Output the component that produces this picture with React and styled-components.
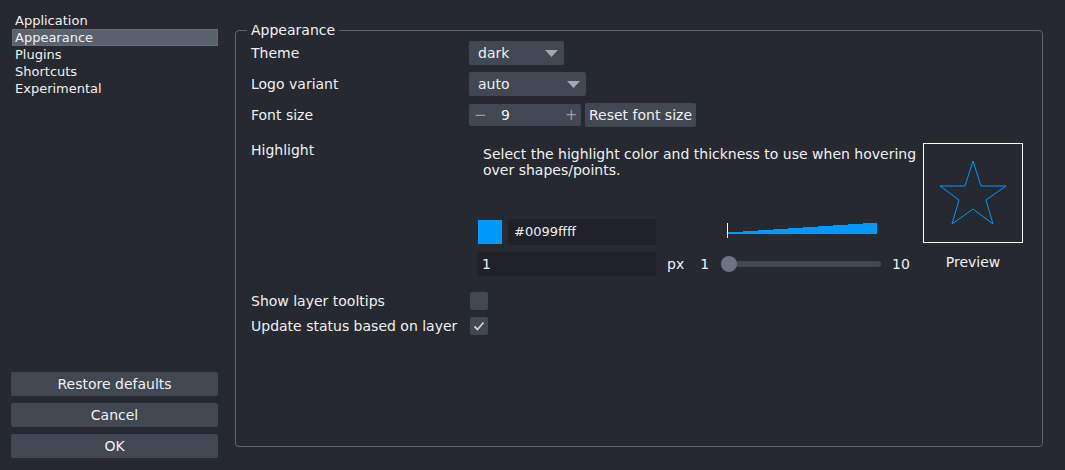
import styled, { createGlobalStyle } from "styled-components";

const GlobalStyle = createGlobalStyle`
  html, body {
    margin: 0;
    height: 100%;
    background: #262930;
    overflow: hidden;
  }
  body {
    font-family: "DejaVu Sans", "Liberation Sans", sans-serif;
    font-size: 14px;
    color: #f0f1f2;
  }
`;

const Dialog = styled.div`
  display: flex;
  width: 1065px;
  height: 470px;
  box-sizing: border-box;
`;

const Sidebar = styled.div`
  width: 207px;
  padding: 12px 0 12px 11px;
  display: flex;
  flex-direction: column;
`;

const NavList = styled.div`
  display: flex;
  flex-direction: column;
  margin-left: 1px;
  width: 206px;
  font-size: 13px;
`;

const NavItem = styled.div`
  height: 17px;
  line-height: 17px;
  padding-left: 3px;
  box-sizing: border-box;
  background: ${(p) => (p.$active ? "#5a626c" : "transparent")};
  outline: ${(p) => (p.$active ? "1px solid #646c76" : "none")};
  outline-offset: -1px;
`;

const ButtonStack = styled.div`
  margin-top: auto;
  display: flex;
  flex-direction: column;
  gap: 7px;
`;

const Button = styled.div`
  height: ${(p) => p.$h || 24}px;
  line-height: ${(p) => p.$h || 24}px;
  background: #414851;
  border-radius: 2px;
  text-align: center;
  padding: 0 ${(p) => (p.$pad ? 4 : 0)}px;
  white-space: nowrap;
`;

const Main = styled.div`
  flex: 1;
  margin: 30px 22px 23px 17px;
  display: flex;
`;

const GroupBox = styled.div`
  position: relative;
  flex: 1;
  border: 1px solid #5f6670;
  border-radius: 4px;
  padding: 10px 15px;
`;

const Legend = styled.div`
  position: absolute;
  top: -9px;
  left: 11px;
  padding: 0 4px;
  line-height: 17px;
  background: #262930;
`;

const Form = styled.div`
  display: grid;
  grid-template-columns: 218px auto;
  row-gap: 7px;
  align-items: center;
  justify-items: start;
`;

const Label = styled.div`
  line-height: 17px;
  align-self: ${(p) => (p.$top ? "start" : "center")};
  margin-top: ${(p) => (p.$top ? 8 : 0)}px;
`;

const Combo = styled.div`
  width: ${(p) => p.$w}px;
  height: 24px;
  box-sizing: border-box;
  background: #414851;
  border-radius: 2px;
  padding: 0 6px 0 9px;
  display: flex;
  align-items: center;
  justify-content: space-between;
`;

const Inline = styled.div`
  display: flex;
  align-items: center;
  gap: 4px;
`;

const SpinBox = styled.div`
  width: 112px;
  height: 22px;
  background: #414851;
  border-radius: 2px;
  display: flex;
  align-items: center;
  padding: 0 5px;
  box-sizing: border-box;
`;

const SpinSign = styled.span`
  color: #9a9fa6;
  font-size: 15px;
  width: 11px;
  text-align: center;
`;

const SpinValue = styled.span`
  margin-left: 16px;
  flex: 1;
`;

const Highlight = styled.div`
  height: 151px;
  display: flex;
  padding-left: 8px;
`;

const HighlightLeft = styled.div`
  width: 438px;
  display: flex;
  flex-direction: column;
`;

const Description = styled.div`
  margin-top: 12px;
  padding-left: 6px;
  line-height: 16px;
  height: 32px;
  width: 440px;
`;

const ColorRow = styled.div`
  margin-top: 41px;
  height: 26px;
  display: flex;
  align-items: center;
`;

const Swatch = styled.div`
  width: 24px;
  height: 24px;
  margin-left: 1px;
  margin-right: 6px;
  background: #0099ff;
`;

const TextInput = styled.div`
  width: ${(p) => p.$w}px;
  height: ${(p) => p.$h}px;
  line-height: ${(p) => p.$h}px;
  font-size: ${(p) => p.$fs}px;
  background: #1f2126;
  border-radius: 2px;
  padding-left: ${(p) => p.$pl}px;
  box-sizing: border-box;
`;

const WidthPreview = styled.svg`
  align-self: flex-start;
  margin-top: 3px;
  margin-left: 71px;
`;

const PxRow = styled.div`
  margin-top: 7px;
  height: 24px;
  display: flex;
  align-items: center;
`;

const PxText = styled.span`
  margin-left: ${(p) => p.$ml}px;
  line-height: 17px;
`;

const Slider = styled.div`
  position: relative;
  margin-left: ${(p) => p.$ml}px;
  width: 160px;
  height: 6px;
  background: #414851;
  border-radius: 3px;
`;

const Handle = styled.div`
  position: absolute;
  left: 0;
  top: -5px;
  width: 16px;
  height: 16px;
  border-radius: 50%;
  background: #6c7480;
`;

const HighlightRight = styled.div`
  width: 100px;
  margin-left: 8px;
  display: flex;
  flex-direction: column;
  align-items: center;
  padding-top: 9px;
`;

const PreviewBox = styled.div`
  width: 100px;
  height: 100px;
  box-sizing: border-box;
  border: 1px solid #ffffff;
  display: flex;
`;

const PreviewLabel = styled.div`
  margin-top: 11px;
  line-height: 17px;
`;

const CheckBox = styled.div`
  width: 18px;
  height: 18px;
  margin-left: 1px;
  background: #414851;
  border-radius: 2px;
  display: flex;
  align-items: center;
  justify-content: center;
`;

function Arrow() {
  return (
    <svg width="13" height="7" viewBox="0 0 13 7">
      <polygon points="0,0 13,0 6.5,7" fill="#a4a9b0" />
    </svg>
  );
}

function Star() {
  return (
    <svg width="98" height="98" viewBox="1 1 98 98">
      <polygon
        points="50,18 58,43 83,43 63,57 70,81 50,66 29,81 36,57 17,43 42,43"
        fill="none"
        stroke="#0099ff"
        strokeWidth="1"
      />
    </svg>
  );
}

const navItems = ["Application", "Appearance", "Plugins", "Shortcuts", "Experimental"];

export default function App() {
  const steps = Array.from({ length: 10 }, (_, i) => i);

  return (
    <>
      <GlobalStyle />
      <Dialog>
        <Sidebar>
          <NavList>
            {navItems.map((item) => (
              <NavItem key={item} $active={item === "Appearance"}>
                {item}
              </NavItem>
            ))}
          </NavList>
          <ButtonStack>
            <Button>Restore defaults</Button>
            <Button>Cancel</Button>
            <Button>OK</Button>
          </ButtonStack>
        </Sidebar>

        <Main>
          <GroupBox>
            <Legend>Appearance</Legend>
            <Form>
              <Label>Theme</Label>
              <Combo $w={95}>
                dark
                <Arrow />
              </Combo>

              <Label>Logo variant</Label>
              <Combo $w={117}>
                auto
                <Arrow />
              </Combo>

              <Label>Font size</Label>
              <Inline>
                <SpinBox>
                  <SpinSign>−</SpinSign>
                  <SpinValue>9</SpinValue>
                  <SpinSign>+</SpinSign>
                </SpinBox>
                <Button $h={24} $pad>
                  Reset font size
                </Button>
              </Inline>

              <Label $top>Highlight</Label>
              <Highlight>
                <HighlightLeft>
                  <Description>
                    Select the highlight color and thickness to use when hovering over
                    shapes/points.
                  </Description>
                  <ColorRow>
                    <Swatch />
                    <TextInput $w={148} $h={26} $pl={6} $fs={13}>
                      #0099ffff
                    </TextInput>
                    <WidthPreview width="150" height="16" viewBox="0 0 150 16">
                      {steps.map((i) => (
                        <rect
                          key={i}
                          x={1 + i * 15}
                          y={12 - (i + 2)}
                          width="15"
                          height={i + 2}
                          fill="#0099ff"
                        />
                      ))}
                      <rect x="0" y="1" width="1" height="15" fill="#ffffff" />
                    </WidthPreview>
                  </ColorRow>
                  <PxRow>
                    <TextInput $w={179} $h={24} $pl={5} $fs={14}>
                      1
                    </TextInput>
                    <PxText $ml={11}>px</PxText>
                    <PxText $ml={16}>1</PxText>
                    <Slider $ml={12}>
                      <Handle />
                    </Slider>
                    <PxText $ml={11}>10</PxText>
                  </PxRow>
                </HighlightLeft>
                <HighlightRight>
                  <PreviewBox>
                    <Star />
                  </PreviewBox>
                  <PreviewLabel>Preview</PreviewLabel>
                </HighlightRight>
              </Highlight>

              <Label>Show layer tooltips</Label>
              <CheckBox />

              <Label>Update status based on layer</Label>
              <CheckBox>
                <svg width="14" height="14" viewBox="0 0 14 14">
                  <path
                    d="M2.5 7.5 L5.5 10.5 L11.5 3.5"
                    fill="none"
                    stroke="#d1d2d4"
                    strokeWidth="1.8"
                  />
                </svg>
              </CheckBox>
            </Form>
          </GroupBox>
        </Main>
      </Dialog>
    </>
  );
}
